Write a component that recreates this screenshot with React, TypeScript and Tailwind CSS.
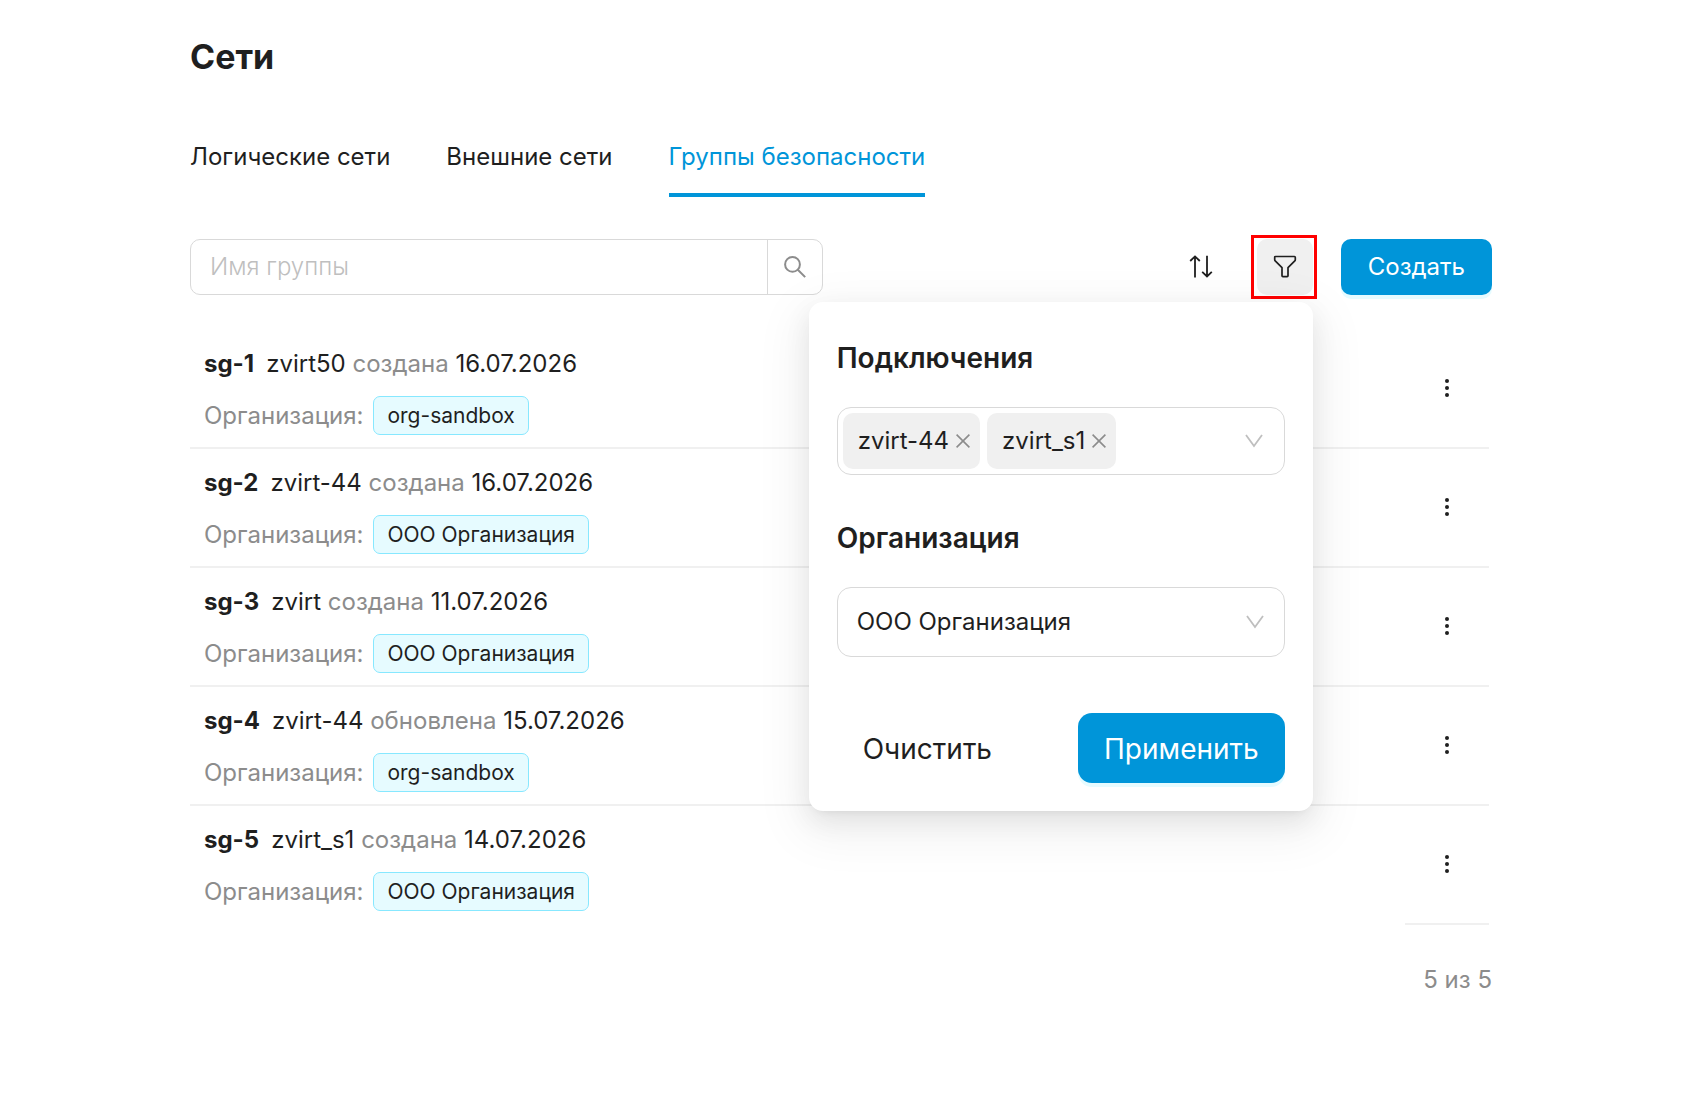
import React, { useState } from "react";

type Group = { name: string, connection: string, action: string, date: string, org: string };

const tabs = ["Логические сети", "Внешние сети", "Группы безопасности"];

const groups: Group[] = [
  { name: "sg-1", connection: "zvirt50", action: "создана", date: "16.07.2026", org: "org-sandbox" },
  { name: "sg-2", connection: "zvirt-44", action: "создана", date: "16.07.2026", org: "ООО Организация" },
  { name: "sg-3", connection: "zvirt", action: "создана", date: "11.07.2026", org: "ООО Организация" },
  { name: "sg-4", connection: "zvirt-44", action: "обновлена", date: "15.07.2026", org: "org-sandbox" },
  { name: "sg-5", connection: "zvirt_s1", action: "создана", date: "14.07.2026", org: "ООО Организация" },
];

function SearchIcon() {
  return (
    <svg width="24" height="24" viewBox="0 0 24 24" fill="none" stroke="#8c8c8c" strokeWidth="2" aria-hidden="true">
      <circle cx="9.5" cy="9.4" r="7.4" />
      <path d="M14.8 14.7l7.4 7.4" />
    </svg>
  );
}

function SortIcon() {
  return (
    <svg width="24" height="24" viewBox="0 0 24 24" fill="none" stroke="#1f1f1f" strokeWidth="1.8" aria-hidden="true">
      <path d="M6 22.5V1.5M1.2 6L6 1.4L10.8 6M18 .8v20.5M13.2 16.8L18 21.4L22.8 16.8" />
    </svg>
  );
}

function FilterIcon() {
  return (
    <svg width="24" height="24" viewBox="0 0 24 24" fill="none" stroke="#1f1f1f" strokeWidth="1.7" strokeLinejoin="round" aria-hidden="true">
      <path d="M2.6 1.5h18.8q.9 0 .9.9v2.3q0 .7-.5 1.2L15 12.7v8q0 .9-.9.9H9.9q-.9 0-.9-.9v-8L2.2 5.9q-.5-.5-.5-1.2V2.4q0-.9.9-.9z" />
    </svg>
  );
}

function ChevronIcon() {
  return (
    <svg width="20" height="20" viewBox="0 0 20 20" fill="none" stroke="#bfbfbf" strokeWidth="1.8" className="pointer-events-none" aria-hidden="true">
      <path d="M2 4l8 11 8-11" />
    </svg>
  );
}

function CloseIcon() {
  return (
    <svg width="14" height="14" viewBox="0 0 14 14" fill="none" stroke="#8c8c8c" strokeWidth="1.6" aria-hidden="true">
      <path d="M.6.6l12.8 12.8M13.4.6L.6 13.4" />
    </svg>
  );
}

function FilterPopover() {
  const [connections, setConnections] = useState(["zvirt-44", "zvirt_s1"]);

  return (
    <div
      role="dialog"
      aria-label="Фильтр"
      className="absolute top-full right-px z-10 mt-1.5 w-[504px] rounded-[14px] bg-white p-7 shadow-[0_10px_27px_0_rgba(0,0,0,0.08),0_5px_10px_-7px_rgba(0,0,0,0.12),0_15px_47px_13px_rgba(0,0,0,0.05)]"
    >
      <h2 className="mt-2 text-[28px] leading-10 font-semibold">Подключения</h2>
      <div className="mt-[29px] flex items-center rounded-[14px] border border-[#d9d9d9] p-[5px] pr-5">
        <div className="flex flex-1 gap-[7px]">
          {connections.map((item) => (
            <span key={item} className="flex h-14 items-center gap-[7px] rounded-[10px] bg-[#f0f0f0] pr-[10px] pl-[15px]">
              {item}
              <button
                type="button"
                aria-label={`Удалить ${item}`}
                onClick={() => setConnections(connections.filter((c) => c !== item))}
              >
                <CloseIcon />
              </button>
            </span>
          ))}
        </div>
        <ChevronIcon />
      </div>

      <h2 className="mt-[43px] text-[28px] leading-10 font-semibold">
        <label htmlFor="org">Организация</label>
      </h2>
      <div className="mt-[29px] grid items-center">
        <select id="org" className="col-start-1 row-start-1 h-[70px] w-full appearance-none rounded-[14px] border border-[#d9d9d9] bg-white px-[19px]">
          <option>ООО Организация</option>
          <option>org-sandbox</option>
        </select>
        <div className="col-start-1 row-start-1 mr-5 justify-self-end">
          <ChevronIcon />
        </div>
      </div>

      <div className="mt-14 flex items-center justify-between text-[28px]">
        <button type="button" className="h-[70px] px-[26px] pt-1">Очистить</button>
        <button type="button" className="h-[70px] rounded-[14px] bg-[#0095d9] px-[26px] pt-1 text-white shadow-[0_4px_0_#e6fbff]">
          Применить
        </button>
      </div>
    </div>
  );
}

export default function App() {
  const [tab, setTab] = useState("Группы безопасности");

  return (
    <main className="min-h-screen bg-white pt-8 pr-[200px] pb-24 pl-[190px] font-['Inter',sans-serif] text-2xl font-normal text-[#1f1f1f]">
      <h1 className="text-[34px] leading-[50px] font-bold">Сети</h1>

      <nav className="mt-[59px] flex gap-14">
        {tabs.map((item) => (
          <a
            key={item}
            href="#"
            onClick={() => setTab(item)}
            className={item === tab
              ? "border-b-4 border-[#0095d9] pb-5 text-[#0095d9]"
              : "border-b-4 border-transparent pb-5"}
          >
            {item}
          </a>
        ))}
      </nav>

      <div className="mt-[42px] flex items-center">
        <form className="flex h-14 w-[633px] rounded-[10px] border border-[#d9d9d9]">
          <input
            type="text"
            aria-label="Имя группы"
            placeholder="Имя группы"
            className="min-w-0 flex-1 px-[19px] font-light outline-none placeholder:text-[#bfbfbf]"
          />
          <button type="button" aria-label="Найти" className="flex w-[55px] items-center justify-center border-l border-[#d9d9d9]">
            <SearchIcon />
          </button>
        </form>

        <div className="ml-auto flex items-center">
          <button type="button" aria-label="Сортировка" className="mr-[22px] flex h-14 w-14 items-center justify-center">
            <SortIcon />
          </button>
          <div className="relative -my-1 mr-6 border-3 border-[red] bg-white py-px pr-px pl-[3px]">
            <button type="button" aria-label="Фильтр" className="flex h-14 w-14 items-center justify-center rounded-[10px] bg-[#f0f0f0]">
              <FilterIcon />
            </button>
            <FilterPopover />
          </div>
          <button type="button" className="h-14 rounded-[10px] bg-[#0095d9] px-[27px] text-white shadow-[0_4px_0_#e6fbff]">
            Создать
          </button>
        </div>
      </div>

      <div className="mt-[35px] pr-[3px]">
        <table className="w-full">
          <tbody>
            {groups.map((group) => (
              <tr key={group.name} className="group">
                <td className="border-b-2 border-[#f0f0f0] pt-[15px] pb-3 pl-[14px] group-last:border-transparent">
                  <p className="h-[38px] leading-[38px]">
                    <b className="mr-3 font-bold">{group.name}</b>
                    {group.connection} <span className="text-[#8c8c8c]">{group.action}</span> {group.date}
                  </p>
                  <p className="mt-[13px] flex items-center">
                    <span className="mr-[10px] text-[#8c8c8c]">Организация:</span>
                    <span className="rounded-[7px] border border-[#87e8ff] bg-[#e6fbff] px-[13px] text-[21px] leading-[37px]">
                      {group.org}
                    </span>
                  </p>
                </td>
                <td className="w-[84px] border-b-2 border-[#f0f0f0] pb-0.5">
                  <button type="button" aria-label={`Действия ${group.name}`} className="mx-auto block p-4">
                    <svg width="20" height="20" viewBox="0 0 20 20" fill="#1f1f1f" aria-hidden="true">
                      <circle cx="10" cy="3" r="2" />
                      <circle cx="10" cy="10" r="2" />
                      <circle cx="10" cy="17" r="2" />
                    </svg>
                  </button>
                </td>
              </tr>
            ))}
          </tbody>
        </table>
      </div>

      <p className="mt-[39px] text-right text-[#8c8c8c]">5 из 5</p>
    </main>
  );
}
